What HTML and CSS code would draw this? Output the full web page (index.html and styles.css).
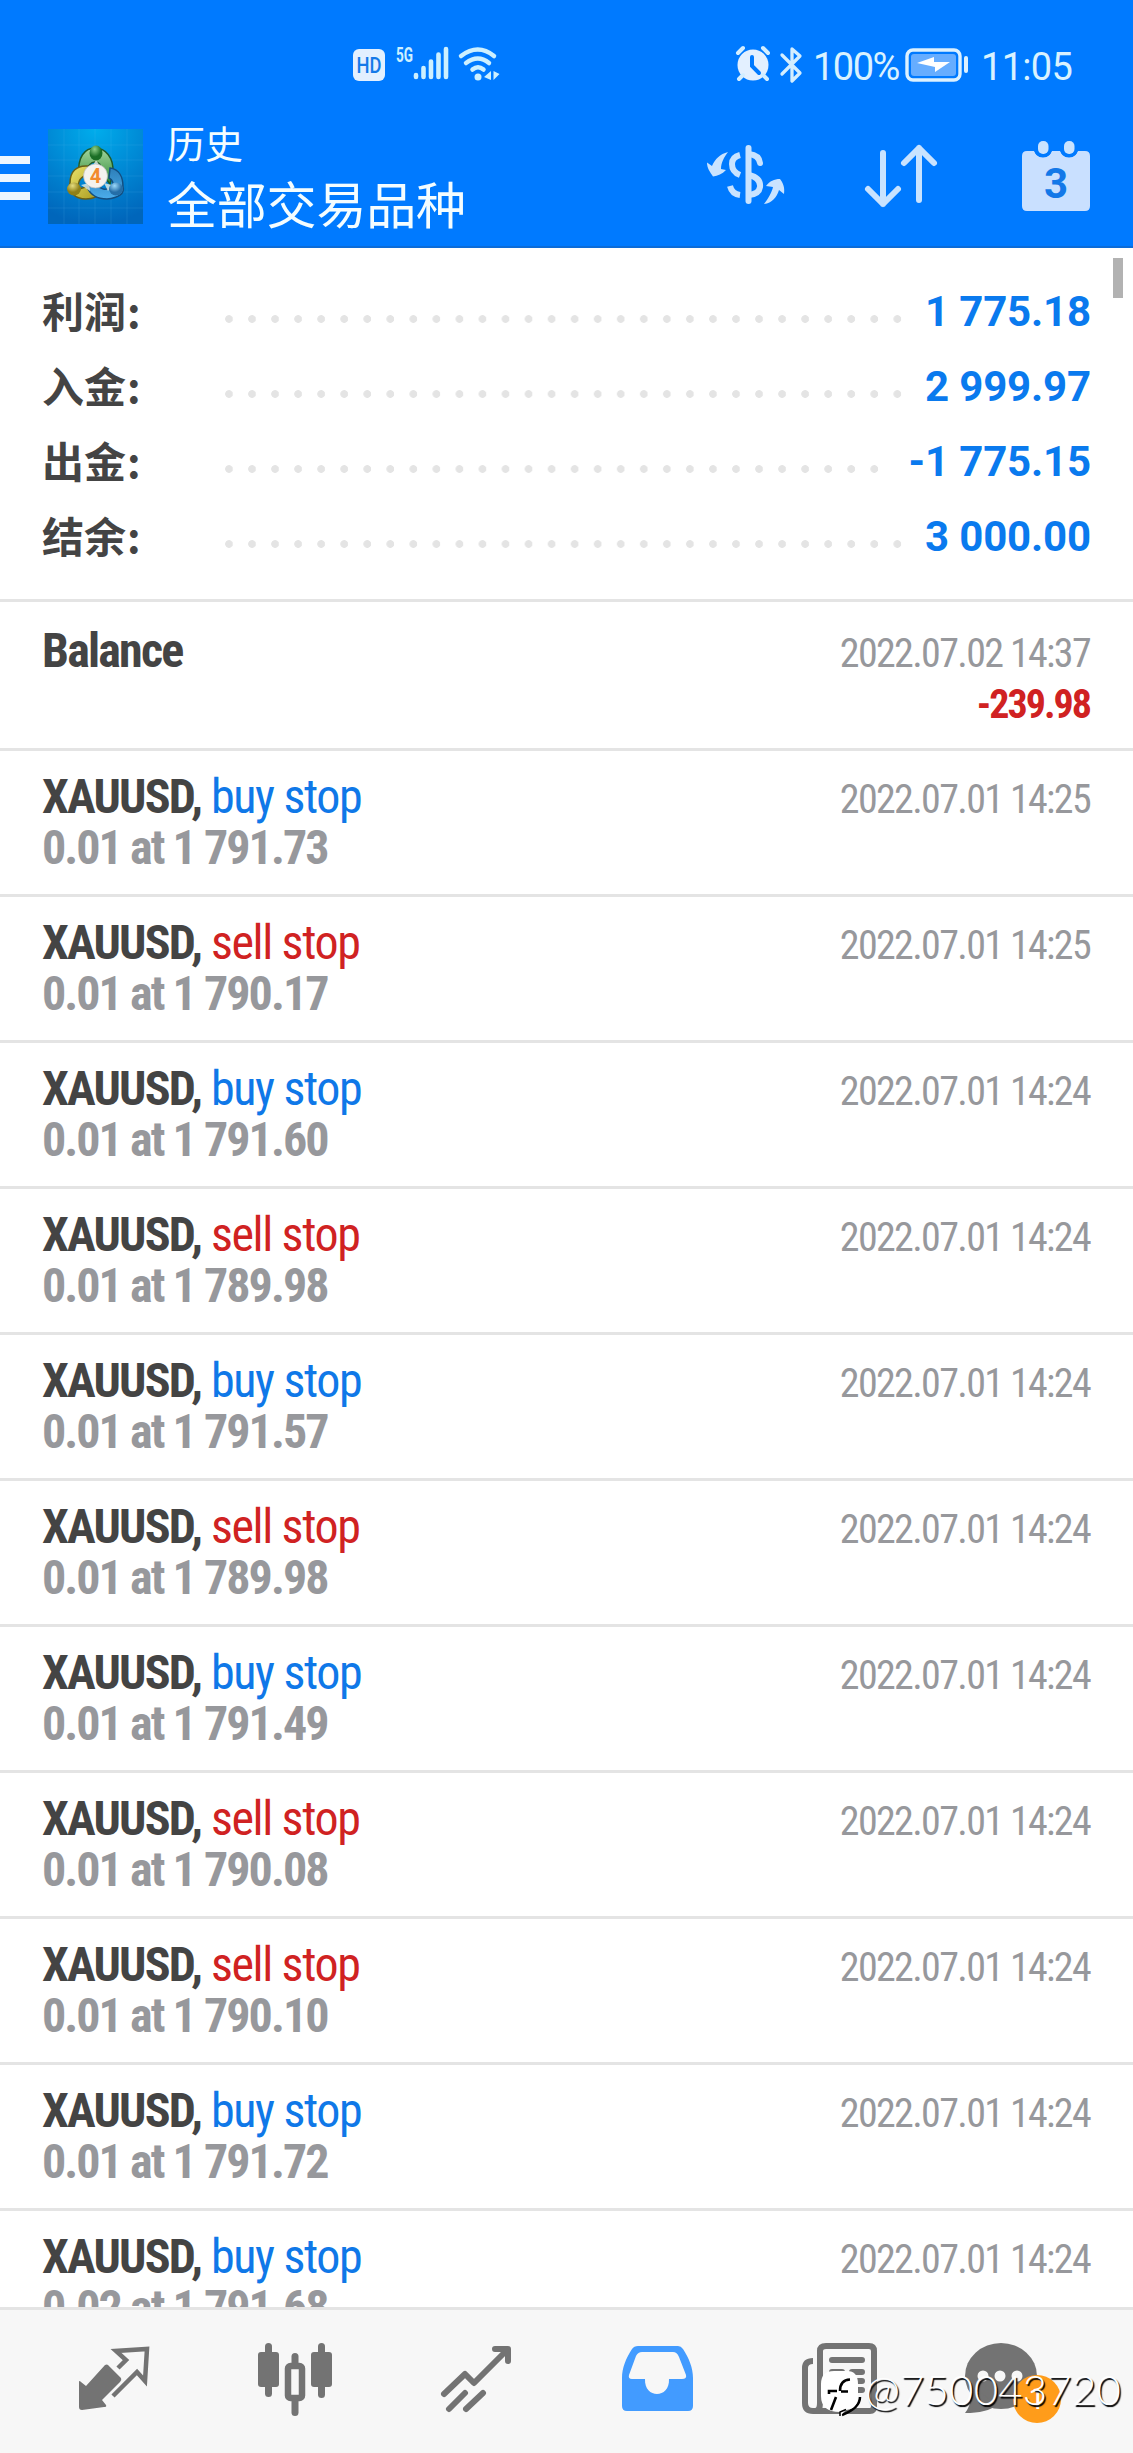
FILE: index.html
```html
<!DOCTYPE html>
<html lang="zh-CN">
<head>
<meta charset="utf-8">
<title>历史</title>
<link rel="stylesheet" href="styles.css">
</head>
<body>
<div class="screen">
  <header class="top">
    <div class="status">
      <div class="status-left">
        <svg class="ic-hd" width="34" height="34" viewBox="0 0 34 34"><rect x="1" y="1" width="32" height="32" rx="6" fill="#e3f0ff"/><text x="17" y="24.500" text-anchor="middle" textLength="25" lengthAdjust="spacingAndGlyphs" class="hd-text">HD</text></svg>
        <svg class="ic-signal" width="54" height="36" viewBox="0 0 54 36"><text x="0" y="16" class="g-text" textLength="17" lengthAdjust="spacingAndGlyphs">5G</text><g stroke="#cdf0ff" stroke-width="4.6" stroke-linecap="round"><path d="M20 31v-2M27.500 31V22M35 31V15.500M42.500 31V8.500M50 31V3"/></g></svg>
        <svg class="ic-wifi" width="44" height="36" viewBox="0 0 44 36"><g fill="none" stroke="#cdf0ff" stroke-width="4.500" stroke-linecap="round"><path d="M3 10Q20 -3 36 10"/><path d="M8 17Q20 8 31 17"/><path d="M14.500 23.500Q20 19 25.500 23.500"/></g><circle cx="20" cy="31" r="3.500" fill="#cdf0ff"/><path d="M26 31l7-6v9zM41.500 28l-6-3v9z" fill="#cdf0ff"/></svg>
      </div>
      <div class="status-right">
        <svg class="ic-alarm" width="36" height="36" viewBox="0 0 36 36"><circle cx="18" cy="19" r="15.500" fill="#e3f0ff"/><path d="M3 7l5-5M33 7l-5-5M8 29l-4 4M28 29l4 4" stroke="#d3eeff" stroke-width="4" stroke-linecap="round"/><path d="M17 11v9l7 7" fill="none" stroke="#007aff" stroke-width="4" stroke-linecap="round"/></svg>
        <svg class="ic-bt" width="22" height="38" viewBox="0 0 22 38"><path d="M2 9L20 27L12 35V3L20 10L2 28" fill="none" stroke="#d3eeff" stroke-width="3.300" stroke-linecap="round" stroke-linejoin="round"/></svg>
        <span class="pct">100%</span>
        <svg class="ic-batt" width="64" height="34" viewBox="0 0 64 34"><rect x="2" y="2" width="53" height="30" rx="6" fill="none" stroke="#dcf1ff" stroke-width="3.400"/><rect x="6" y="6" width="45" height="22" rx="3" fill="#66adff"/><path d="M12 15L29 9V14H45L30 24V19z" fill="#fff"/><path d="M61 10v13" stroke="#dcf1ff" stroke-width="4" stroke-linecap="round"/></svg>
        <span class="clock">11:05</span>
      </div>
    </div>
    <div class="bar">
      <div class="menu"><i></i><i></i><i></i></div>
      <svg class="logo" width="95" height="95" viewBox="0 0 95 95">
        <defs>
          <radialGradient id="bg" cx=".5" cy="0" r="1"><stop offset="0" stop-color="#00adec"/><stop offset=".55" stop-color="#0086d3"/><stop offset="1" stop-color="#0066bb"/></radialGradient>
          <linearGradient id="gr" x2="0" y2="1"><stop offset="0" stop-color="#a5d6a0"/><stop offset="1" stop-color="#2c8a32"/></linearGradient>
          <linearGradient id="ye" x2="1" y2="1"><stop offset="0" stop-color="#ece36c"/><stop offset="1" stop-color="#a89a1d"/></linearGradient>
          <linearGradient id="bl" x2="0" y2="1"><stop offset="0" stop-color="#2d7fb9"/><stop offset="1" stop-color="#4bacea"/></linearGradient>
          <radialGradient id="hg" cx=".4" cy=".25"><stop offset="0" stop-color="#8fcf88"/><stop offset="1" stop-color="#1b6e26"/></radialGradient>
          <radialGradient id="hy" cx=".4" cy=".25"><stop offset="0" stop-color="#e6dd80"/><stop offset="1" stop-color="#8f8018"/></radialGradient>
          <radialGradient id="hb" cx=".4" cy=".25"><stop offset="0" stop-color="#9bd9fa"/><stop offset="1" stop-color="#246ea8"/></radialGradient>
        </defs>
        <rect width="95" height="95" fill="url(#bg)"/>
        <path d="M0 16H95M0 31H95M0 47H95M0 63H95M0 79H95M16 0V95M31 0V95M47 0V95M63 0V95M79 0V95" stroke="#5fc4f2" stroke-opacity=".15"/>
        <path d="M31 46C29 28 37 19 47 19S66 28 65 44L62 55L52 42C54 36 51 33 47 33S39 37 40 42z" fill="url(#gr)" stroke="#1f5b29" stroke-width="1.500"/>
        <path d="M40 37C28 36 22 43 22 54C19 62 27 70 38 70C46 70 50 67 51 63L41 57L31 60C29 53 32 47 42 45z" fill="url(#ye)" stroke="#685f17" stroke-width="1.500"/>
        <path d="M39 58C42 65 48 70 59 70C71 69 77 64 75 58C75 48 71 40 62 39L61 49C65 51 66 55 64 58C58 62 52 60 49 56z" fill="url(#bl)" stroke="#134e80" stroke-width="1.500"/>
        <path d="M48 31l6 9H43zM33 56l8-2 1 8zM56 54l8 2-4 6z" fill="#e7efe4" fill-opacity=".8"/>
        <ellipse cx="48" cy="24" rx="6.500" ry="7.500" fill="url(#hg)"/><ellipse cx="26" cy="60" rx="7" ry="6.500" fill="url(#hy)"/><ellipse cx="68" cy="60" rx="7" ry="6.500" fill="url(#hb)"/>
        <circle cx="47.500" cy="47" r="12" fill="#f4f2ee" stroke="#bbb" stroke-width=".7"/>
        <text x="47.500" y="54" text-anchor="middle" class="logo-num">4</text>
      </svg>
      <div class="titles"><div class="t1">历史</div><div class="t2">全部交易品种</div></div>
      <div class="actions">
        <svg width="80" height="62" viewBox="0 0 80 62"><g fill="#c9e3ff"><path d="M1 10.500L6 14C9 7 14 2 22 0C18 5 15 11 15 17L20 18C16 22 12 24 7 24.500C4 20 1 16 1 10.500z"/><path d="M58 52C62 47 66 40 67 35L60 34C64 29 68 27 74 27C77 31 79 35 78 42L73 38C71 45 66 51 58 52z"/></g><g fill="none" stroke="#c9e3ff" stroke-width="6"><path d="M34 3Q26 5 26 12Q26 20 34 23"/><path d="M24 34Q26 42 34 43" stroke-linecap="butt"/><path d="M42.500-4V49" stroke-linecap="round"/><path d="M43 2Q53 3 54 11" stroke-linecap="round"/><path d="M43 23Q55 26 54 35Q53 42 43 43"/></g></svg>
        <svg width="74" height="64" viewBox="0 0 74 64"><path d="M19 9V60M4 45L19 60L34 45M55 56V4M40 19L55 4L70 19" fill="none" stroke="#c9e3ff" stroke-width="6" stroke-linecap="round" stroke-linejoin="round"/></svg>
        <svg width="68" height="70" viewBox="0 0 68 70"><path d="M5 10H12Q15 16 21 16T30 10H38Q41 16 47 16T56 10H63Q68 10 68 15V65Q68 70 63 70H5Q0 70 0 65V15Q0 10 5 10z" fill="#c9e0ff"/><path d="M12 8Q13 16.500 21 16.500T30 8zM38 8Q39 16.500 47 16.500T56 8z" fill="#007aff"/><rect x="16" y="0" width="10.500" height="13" rx="5" fill="#c9e3ff"/><rect x="42" y="0" width="10.500" height="13" rx="5" fill="#c9e3ff"/><text x="34" y="57" text-anchor="middle" class="cal-num">3</text></svg>
      </div>
    </div>
  </header>

  <main class="content">
    <div class="scroll-thumb"></div>
    <section class="summary">
      <div class="sum"><b>利润<i>:</i></b><span class="dots"></span><em>1 775.18</em></div>
      <div class="sum"><b>入金<i>:</i></b><span class="dots"></span><em>2 999.97</em></div>
      <div class="sum"><b>出金<i>:</i></b><span class="dots short"></span><em>-1 775.15</em></div>
      <div class="sum"><b>结余<i>:</i></b><span class="dots"></span><em>3 000.00</em></div>
    </section>
    <section class="deals">
      <div class="deal balance"><div><p class="name"><b>Balance</b></p></div><div class="side"><p class="date">2022.07.02 14:37</p><p class="loss">-239.98</p></div></div>
      <div class="deal"><div><p class="name"><b>XAUUSD,</b> <span class="buy">buy stop</span></p><p class="vol">0.01 at 1 791.73</p></div><div class="side"><p class="date">2022.07.01 14:25</p></div></div>
      <div class="deal"><div><p class="name"><b>XAUUSD,</b> <span class="sell">sell stop</span></p><p class="vol">0.01 at 1 790.17</p></div><div class="side"><p class="date">2022.07.01 14:25</p></div></div>
      <div class="deal"><div><p class="name"><b>XAUUSD,</b> <span class="buy">buy stop</span></p><p class="vol">0.01 at 1 791.60</p></div><div class="side"><p class="date">2022.07.01 14:24</p></div></div>
      <div class="deal"><div><p class="name"><b>XAUUSD,</b> <span class="sell">sell stop</span></p><p class="vol">0.01 at 1 789.98</p></div><div class="side"><p class="date">2022.07.01 14:24</p></div></div>
      <div class="deal"><div><p class="name"><b>XAUUSD,</b> <span class="buy">buy stop</span></p><p class="vol">0.01 at 1 791.57</p></div><div class="side"><p class="date">2022.07.01 14:24</p></div></div>
      <div class="deal"><div><p class="name"><b>XAUUSD,</b> <span class="sell">sell stop</span></p><p class="vol">0.01 at 1 789.98</p></div><div class="side"><p class="date">2022.07.01 14:24</p></div></div>
      <div class="deal"><div><p class="name"><b>XAUUSD,</b> <span class="buy">buy stop</span></p><p class="vol">0.01 at 1 791.49</p></div><div class="side"><p class="date">2022.07.01 14:24</p></div></div>
      <div class="deal"><div><p class="name"><b>XAUUSD,</b> <span class="sell">sell stop</span></p><p class="vol">0.01 at 1 790.08</p></div><div class="side"><p class="date">2022.07.01 14:24</p></div></div>
      <div class="deal"><div><p class="name"><b>XAUUSD,</b> <span class="sell">sell stop</span></p><p class="vol">0.01 at 1 790.10</p></div><div class="side"><p class="date">2022.07.01 14:24</p></div></div>
      <div class="deal"><div><p class="name"><b>XAUUSD,</b> <span class="buy">buy stop</span></p><p class="vol">0.01 at 1 791.72</p></div><div class="side"><p class="date">2022.07.01 14:24</p></div></div>
      <div class="deal"><div><p class="name"><b>XAUUSD,</b> <span class="buy">buy stop</span></p><p class="vol">0.02 at 1 791.68</p></div><div class="side"><p class="date">2022.07.01 14:24</p></div></div>
    </section>
  </main>

  <nav class="tabs">
    <svg width="76" height="76" viewBox="0 0 76 76"><path d="M31 22L44 35Q45 37 43 39L25 57L29 62Q30 64 27 64L5 67Q2 67 2 64V39Q2 37 4 39L9 43L28 22Q30 21 31 22z" fill="#737373"/><path d="M41 25L49 17L39 8L70 6L68 38L60 29L36 53" fill="none" stroke="#737373" stroke-width="4.500"/></svg>
    <svg width="76" height="76" viewBox="0 0 76 76"><g fill="#737373"><rect x="1" y="9" width="21" height="35" rx="3"/><rect x="8" y="0" width="7" height="54" rx="3.500"/><rect x="54" y="9" width="21" height="35" rx="3"/><rect x="61" y="0" width="7" height="55" rx="3.500"/><rect x="34.500" y="10" width="7" height="14" rx="3.500"/><rect x="34.500" y="54" width="7" height="19" rx="3.500"/></g><rect x="31" y="23" width="14" height="32" rx="2.500" fill="none" stroke="#737373" stroke-width="6.500"/></svg>
    <svg width="76" height="76" viewBox="0 0 76 76"><path d="M6 51L27 31L36 40L68 8M57 6H70V18M11 66L27 50M28 66L45 50" fill="none" stroke="#737373" stroke-width="6" stroke-linecap="round" stroke-linejoin="round"/></svg>
    <svg width="76" height="76" viewBox="0 0 76 76"><path fill-rule="evenodd" d="M18 3H58Q61 3 63 6C69 15 73 25 73 35V63Q73 68 68 68H7Q2 68 2 63V35C2 25 6 15 12 6Q14 3 18 3zM22 9Q18 9 16 13L9 32Q8 36 12 36H25C24 56 50 56 49 36H62Q67 36 66 32L59 14Q57 9 53 9z" fill="#429bff"/></svg>
    <svg width="76" height="76" viewBox="0 0 76 76"><g fill="none" stroke="#737373" stroke-width="6"><path d="M12 18Q4 18 4 25V60Q4 68 12 68H69Q73 68 73 63V8Q73 3 68 3H25Q19 3 19 8V60Q19 68 14 68"/><path d="M31 17H61M31 29H41M51 29H61M51 38H61M31 47H61" stroke-linecap="round"/></g></svg>
    <svg class="chat" width="76" height="76" viewBox="0 0 76 76"><ellipse cx="38" cy="33" rx="36" ry="33" fill="#737373"/><path d="M5 40Q12 57 2 70Q24 70 34 62z" fill="#737373"/><circle cx="20" cy="33" r="5.500" fill="#f7f7f7"/><circle cx="37" cy="33" r="5.500" fill="#f7f7f7"/><circle cx="54" cy="33" r="5.500" fill="#f7f7f7"/></svg>
    <span class="badge">1</span>
    <div class="watermark">
      <svg width="42" height="46" viewBox="0 0 42 46"><path d="M22 44Q40 37 40 26" fill="none" stroke="#000" stroke-width="2.500"/><path d="M14 0H27Q38 0 38 13V24Q38 38 26 39L20 45V41Q1 41 1 25V13Q1 0 14 0z" fill="#fff"/><path d="M20 45V41L26 38.500" fill="none" stroke="#000" stroke-width="1.500"/><path d="M20 20Q20 9 30 8.500M9 23V20H17M21 20.500H28M16 26L11 39" fill="none" stroke="#000" stroke-width="2.600"/></svg>
      <span>@750043720</span>
    </div>
  </nav>
</div>
</body>
</html>
```
FILE: styles.css
```css
* { box-sizing: border-box; }
body { margin: 0; background: #fff; font-family: Roboto, "Noto Sans CJK SC", sans-serif; }
p { margin: 0; }
svg { display: block; overflow: visible; flex: none; }
.screen { width: 1133px; height: 2453px; display: flex; flex-direction: column; overflow: hidden; }

.top { height: 248px; flex: none; background: #007aff; border-bottom: 2px solid #0c6cd8; }
.status { height: 110px; display: flex; justify-content: space-between; padding: 46px 62px 0 352px; }
.status-left, .status-right { display: flex; align-items: flex-start; }
.ic-hd { margin-top: 2px; }
.ic-signal { margin-left: 10px; }
.ic-wifi { margin-left: 8px; }
.hd-text { font: 500 22px Roboto, sans-serif; fill: #1479e8; }
.g-text { font: 700 20px Roboto, sans-serif; fill: #cdf0ff; }
.status-right { color: #d9f2ff; font-size: 38px; line-height: 42px; }
.ic-bt { margin-left: 9px; }
.pct { margin: 0 6px 0 11px; width: 86px; letter-spacing: -1.5px; white-space: nowrap; }
.ic-batt { margin-top: 2px; }
.clock { margin-left: 12px; width: 90px; letter-spacing: -.7px; }

.bar { height: 136px; display: flex; align-items: flex-start; }
.menu { width: 30px; margin-top: 46px; display: grid; gap: 10px; }
.menu i { height: 8px; background: #ecf6ff; }
.logo { margin: 19px 0 0 18px; }
.logo-num { font: 700 20px Roboto, sans-serif; fill: #f28a2e; }
.titles { margin-left: 24px; color: #f4fdff; font-family: "Noto Sans CJK SC", sans-serif; }
.t1 { font-size: 38px; line-height: 50px; margin-top: 7px; }
.t2 { font-size: 50px; line-height: 66px; margin-top: 2px; letter-spacing: -.2px; }
.actions { margin: 31px 43px 0 auto; display: flex; align-items: flex-start; }
.actions svg:nth-child(1) { margin: 11px 78px 0 0; }
.actions svg:nth-child(2) { margin: 3px 84px 0 0; }
.cal-num { font: 700 42px Roboto, sans-serif; fill: #1378e8; }

.content { flex: 1; min-height: 0; overflow: hidden; position: relative; }
.scroll-thumb { position: absolute; right: 10px; top: 10px; width: 10px; height: 40px; background: #b2b2b2; }
.summary { height: 354px; padding: 26px 42px 0; border-bottom: 3px solid #e4e4e4; }
.sum { height: 75px; display: flex; align-items: center; }
.sum b { width: 183px; padding-bottom: 4px; font: 700 42px/71px "Noto Sans CJK SC", sans-serif; color: #444; }
.sum i { font-style: normal; margin-left: 1px; }
.dots { width: 691px; height: 8px; margin-top: 14px; background: radial-gradient(circle at 4px 4px, #e4e4e4 3.5px, transparent 4.2px) 0 0 / 23.05px 8px repeat-x; }
.dots.short { width: 668px; }
.sum em { margin-left: auto; font: 700 42px/75px Roboto, sans-serif; letter-spacing: -.15px; color: #0a7aee; }

.deal { height: 146px; padding: 20px 42px 0; display: flex; justify-content: space-between; border-bottom: 3px solid #e4e4e4; font-family: "Roboto Condensed", Roboto, sans-serif; font-stretch: 75%; white-space: nowrap; }
.deal.balance { height: 149px; padding-top: 23px; }
.name, .vol { font-size: 48px; line-height: 51px; letter-spacing: -1.35px; }
.name b { color: #444; letter-spacing: -1.8px; }
.buy { color: #0f78e8; }
.sell { color: #d02222; }
.vol { font-weight: 700; color: #97989c; letter-spacing: -1.95px; }
.side { text-align: right; font-size: 40px; line-height: 51px; padding-top: 3px; margin-right: 1px; letter-spacing: -1.65px; }
.date { color: #97989c; }
.loss { color: #d02222; font-weight: 700; letter-spacing: -2px; }

.tabs { height: 146px; flex: none; position: relative; background: #f7f7f7; border-top: 3px solid #e4e4e4; display: flex; gap: 105px; padding: 33px 0 0 77px; }
.tabs > svg:nth-child(2), .tabs > svg:nth-child(3) { margin: 0 1px 0 -1px; }
.chat { margin-left: -19px; }
.badge { position: absolute; left: 1013px; top: 65px; width: 48px; height: 48px; border-radius: 50%; background: #ff9c1a; color: #fff; font-size: 30px; line-height: 48px; text-align: center; }
.watermark { position: absolute; left: 820px; top: 61px; display: flex; color: #fff; font: 300 42px/46px Lato, sans-serif; letter-spacing: .2px; text-shadow: 1.500px 1.500px 1px #000; }
.watermark span { margin: -5px 0 0 3px; }
```
